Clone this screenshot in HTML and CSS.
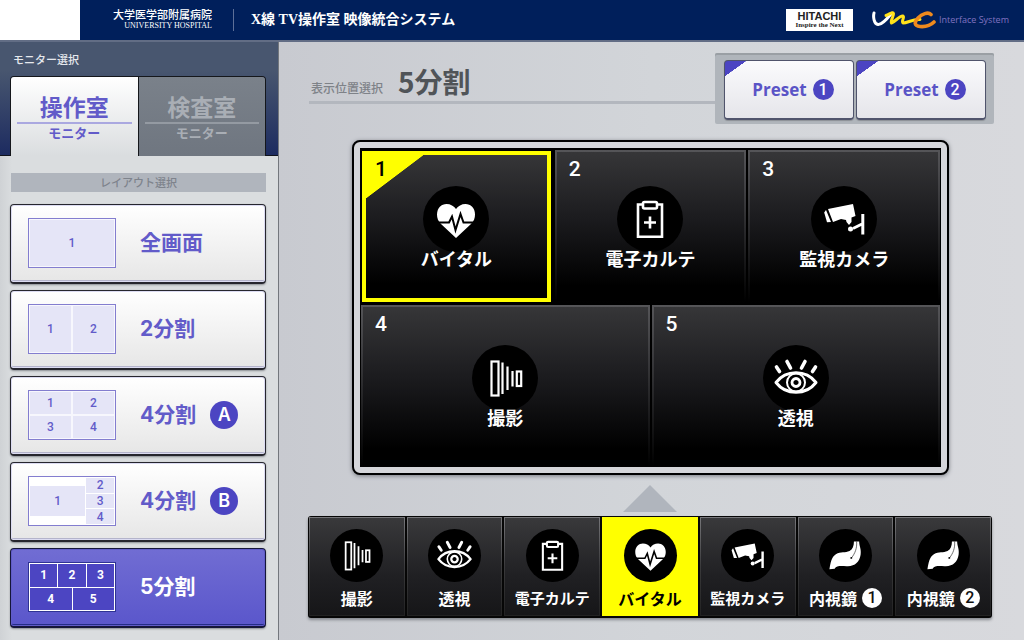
FILE: index.html
```html
<!DOCTYPE html>
<html lang="ja">
<head>
<meta charset="utf-8">
<meta name="viewport" content="width=device-width, initial-scale=1">
<title>X線 TV操作室 映像統合システム</title>
<link rel="stylesheet" href="styles.css">
</head>
<body>
<svg class="sprite" aria-hidden="true">
  <symbol id="i-heart" viewBox="-33 -33 66 66">
    <path fill="#fff" d="M0 19L-15 5C-18 2-19-1-19-4.500C-19-11-14.500-15-9.500-15C-5.500-15-2-13 0-10C2-13 5.500-15 9.500-15C14.500-15 19-11 19-4.500C19-1 18 2 15 5Z"/>
    <path fill="none" stroke="#000" stroke-width="2" d="M-20 3.500H-7L-4-2.500L-.5 11L4.500-5L7.500 3.500H20"/>
  </symbol>
  <symbol id="i-chart" viewBox="-33 -33 66 66">
    <g fill="none" stroke="#fff" stroke-width="2.600">
      <path d="M-8-14.500H-12V17.800H12V-14.500H8"/>
      <rect x="-7" y="-17" width="14" height="6.500" rx="1.500"/>
      <path d="M-6 3.500H6M0-2.500V9.500"/>
    </g>
  </symbol>
  <symbol id="i-camera" viewBox="-33 -33 66 66">
    <g fill="#fff">
      <path d="M-16-10L9-15L11.500-3L7.500-1.500L7.500 3L5 6L2.500 3L2 1L-3 0L-11 3Z"/>
      <path d="M-19.800-6.500L-18-9L-13 3L-17 3.200Z"/>
      <circle cx="6.500" cy="10" r="2.500"/>
    </g>
    <path fill="none" stroke="#fff" stroke-width="3" d="M9 9.500L18 5M18.800-5V15.500"/>
  </symbol>
  <symbol id="i-shoot" viewBox="-33 -33 66 66">
    <g fill="none" stroke="#fff" stroke-width="2.200">
      <rect x="-13.500" y="-16.500" width="7" height="34"/>
      <path d="M-2.500-15.500V16M2.500-11.500V12M7.500-7V8.500"/>
      <rect x="11.800" y="-6.500" width="4.400" height="14.500"/>
    </g>
  </symbol>
  <symbol id="i-eye" viewBox="-33 -33 66 66">
    <g fill="none" stroke="#fff" stroke-width="3" stroke-linecap="round" stroke-linejoin="round">
      <path d="M-20 4.500C-10-8.500 10-8.500 20 4.500C10 17.500-10 17.500-20 4.500Z"/>
      <circle cx="0" cy="4.500" r="4" stroke-width="2.800"/>
      <circle cx="0" cy="4.500" r="9" stroke-width="2"/>
      <path stroke-width="3.600" d="M-19.500-11L-16.500-6.500M-9-16.500L-5.500-10M9-16.500L5.500-10M19.500-11L16.500-6.500"/>
    </g>
  </symbol>
  <symbol id="i-scope" viewBox="-33 -33 66 66">
    <path fill="#fff" d="M10.500-17.500H17C17-12 20-8 18.800-1C17.500 8 12 13 3 13.300C-5 13.500-11 12-13.500 16.500L-20 17C-18.500 9-17.500 2-12-1.500C-6-5 0-3 5-5.500C9-8 10.500-12 10.500-17.500Z"/>
    <path fill="none" stroke="#222" stroke-width=".8" d="M13.800-17.500C14.500-9 12-3 7.500 3"/>
    <circle cx="7.200" cy="3" r="1.200"/>
  </symbol>
</svg>

<header class="topbar">
  <div class="topbar-blank"></div>
  <div class="hospital">
    <span class="hospital-ja">大学医学部附属病院</span>
    <span class="hospital-en">UNIVERSITY HOSPITAL</span>
  </div>
  <h1 class="system-name">X線 TV操作室 映像統合システム</h1>
  <div class="brand-hitachi">
    <span class="brand-name">HITACHI</span>
    <span class="brand-tag">Inspire the Next</span>
  </div>
  <div class="brand-umc">
    <svg class="umc-mark" viewBox="0 0 64 20" aria-hidden="true">
      <g fill="none" stroke-linecap="round" stroke-linejoin="round">
        <path stroke="#fff" stroke-width="3" d="M2 3C1 7 2 14 6 14.500C10 15 15 9 19 4"/>
        <path stroke="#ffe21a" stroke-width="3" d="M14 5.500C18 4 21 1.500 21.500 3.500C22 6 18 11 19.500 13C23 12 28 5 31 6C33 7 29 11 31 13C36 13 40 9 48 9.500"/>
        <path stroke="#ef8a1d" stroke-width="3.600" d="M59 4.500C56 1.500 50 4 46 8C42 12 42 16 48 16.500C54 17 59 15 62 12"/>
      </g>
    </svg>
    <span>Interface System</span>
  </div>
</header>

<div class="workspace">
  <aside class="sidebar">
    <div class="monitor-select">
      <h2 class="sidebar-title">モニター選択</h2>
      <div class="tabs" role="tablist">
        <button class="tab tab-active" role="tab" aria-selected="true"><span class="tab-name">操作室</span><span class="tab-sub">モニター</span></button>
        <button class="tab" role="tab" aria-selected="false"><span class="tab-name">検査室</span><span class="tab-sub">モニター</span></button>
      </div>
    </div>
    <h2 class="layout-title">レイアウト選択</h2>
    <div class="layouts">
      <button class="layout"><span class="mini mini-1"><i>1</i></span><span class="layout-name">全画面</span></button>
      <button class="layout"><span class="mini mini-2"><i>1</i><i>2</i></span><span class="layout-name">2分割</span></button>
      <button class="layout"><span class="mini mini-2"><i>1</i><i>2</i><i>3</i><i>4</i></span><span class="layout-name">4分割</span><span class="mark">A</span></button>
      <button class="layout"><span class="mini mini-b"><i class="mini-main">1</i><i>2</i><i>3</i><i>4</i></span><span class="layout-name">4分割</span><span class="mark">B</span></button>
      <button class="layout layout-active" aria-pressed="true"><span class="mini mini-5"><i>1</i><i>2</i><i>3</i><i>4</i><i>5</i></span><span class="layout-name">5分割</span></button>
    </div>
  </aside>

  <main class="stage">
    <div class="stage-head">
      <div class="stage-title">
        <span class="stage-caption">表示位置選択</span>
        <h2 class="stage-name">5分割</h2>
      </div>
      <div class="presets">
        <button class="preset">Preset <span class="preset-no">1</span></button>
        <button class="preset">Preset <span class="preset-no">2</span></button>
      </div>
    </div>

    <div class="monitor">
      <div class="screens">
        <button class="screen screen-active"><span class="screen-no">1</span><span class="screen-body"><svg class="disc"><use href="#i-heart"/></svg>バイタル</span></button>
        <button class="screen"><span class="screen-no">2</span><span class="screen-body"><svg class="disc"><use href="#i-chart"/></svg>電子カルテ</span></button>
        <button class="screen"><span class="screen-no">3</span><span class="screen-body"><svg class="disc"><use href="#i-camera"/></svg>監視カメラ</span></button>
        <button class="screen screen-wide"><span class="screen-no">4</span><span class="screen-body"><svg class="disc"><use href="#i-shoot"/></svg>撮影</span></button>
        <button class="screen screen-wide"><span class="screen-no">5</span><span class="screen-body"><svg class="disc"><use href="#i-eye"/></svg>透視</span></button>
      </div>
    </div>

    <div class="sources">
      <button class="source"><svg class="disc"><use href="#i-shoot"/></svg><span class="source-name">撮影</span></button>
      <button class="source"><svg class="disc"><use href="#i-eye"/></svg><span class="source-name">透視</span></button>
      <button class="source"><svg class="disc"><use href="#i-chart"/></svg><span class="source-name source-long">電子カルテ</span></button>
      <button class="source source-active" aria-pressed="true"><svg class="disc"><use href="#i-heart"/></svg><span class="source-name">バイタル</span></button>
      <button class="source"><svg class="disc"><use href="#i-camera"/></svg><span class="source-name source-long">監視カメラ</span></button>
      <button class="source"><svg class="disc"><use href="#i-scope"/></svg><span class="source-name">内視鏡<span class="source-no">1</span></span></button>
      <button class="source"><svg class="disc"><use href="#i-scope"/></svg><span class="source-name">内視鏡<span class="source-no">2</span></span></button>
    </div>
  </main>
</div>
</body>
</html>
```

FILE: styles.css
```css
* { box-sizing: border-box; }

body {
  margin: 0;
  min-height: 100vh;
  display: flex;
  flex-direction: column;
  font-family: "Noto Sans CJK JP", sans-serif;
  font-weight: 700;
  background: #d2d4d8;
}

h1, h2 { margin: 0; }

button {
  font: inherit;
  margin: 0;
  padding: 0;
  border: 0;
  cursor: pointer;
}

.sprite { position: absolute; width: 0; height: 0; }

/* Top bar */
.topbar {
  display: flex;
  align-items: center;
  height: 42px;
  padding-right: 15px;
  background: #001f5b;
  border-bottom: 2px solid #626d85;
  color: #fff;
  font-family: "Liberation Serif", "Noto Sans CJK JP", serif;
  white-space: nowrap;
}

.topbar-blank { width: 80px; align-self: stretch; background: #fff; }

.hospital {
  display: flex;
  flex-direction: column;
  align-items: flex-end;
  width: 154px;
  padding-right: 21px;
  border-right: 1px solid #5d6f98;
}

.hospital-ja { font-size: 11px; line-height: 12px; font-weight: 500; }
.hospital-en { font-size: 8px; line-height: 10px; font-weight: 400; }

.system-name {
  flex: 1;
  padding-left: 17px;
  font-size: 14px;
  line-height: 20px;
}

.brand-hitachi {
  display: flex;
  flex-direction: column;
  align-items: center;
  width: 67px;
  padding: 2px 0;
  background: #fff;
  color: #222;
}

.brand-name { font: 700 11px/10px "Liberation Sans", sans-serif; }
.brand-tag { font: 700 7px/8px "Liberation Serif", serif; }

.brand-umc {
  display: flex;
  align-items: center;
  gap: 3px;
  margin-left: 19px;
  color: #8173c0;
  font: 400 9px/12px "Open Sans", sans-serif;
}

.umc-mark { width: 64px; height: 20px; }

/* Workspace */
.workspace { flex: 1; display: flex; }

.sidebar {
  width: 279px;
  flex: none;
  border-right: 1px solid #73777d;
  background: linear-gradient(90deg, #cfd2d5, #dadddf 12px, #dadddf);
}

.monitor-select {
  padding: 7px 12px 0 10px;
  background: linear-gradient(#48566f 25%, #1c2b60);
  box-shadow: inset 0 -1px #10131c;
}

.sidebar-title {
  padding-left: 3px;
  font-size: 11px;
  line-height: 20px;
  font-weight: 500;
  color: #e6e9ee;
}

.tabs {
  display: flex;
  margin-top: 7px;
  border: solid #15171b;
  border-width: 1px 1px 0;
  border-radius: 4px 4px 0 0;
  overflow: hidden;
}

.tab {
  flex: 1;
  height: 79px;
  padding: 13px 6px 0;
  display: flex;
  flex-direction: column;
  background: linear-gradient(#7a818a, #6f7680);
  color: #a9aeb5;
}

.tab-active {
  background: linear-gradient(#fff, #dadddf);
  border-right: 1px solid #15171b;
  color: #625bc9;
}

.tab-name {
  font-size: 23px;
  line-height: 32px;
  border-bottom: 2px solid #aaa8e0;
}

.tab:not(.tab-active) .tab-name { border-color: #949aa2; }
.tab-sub { font-size: 13px; line-height: 18px; }

.layout-title {
  margin: 17px 12px 0 11px;
  background: #b0b5bd;
  color: #7e838c;
  font-size: 11px;
  line-height: 19px;
  font-weight: 500;
  text-align: center;
}

.layouts {
  display: flex;
  flex-direction: column;
  gap: 6px;
  padding: 12px 12px 12px 10px;
}

.layout {
  display: flex;
  align-items: center;
  height: 80px;
  padding: 0 17px 1px;
  border: 1px solid #26262e;
  border-bottom-width: 2px;
  border-radius: 4px;
  background: linear-gradient(#fff, #e6e6e6);
  box-shadow: inset 0 0 0 1px #dcdcf2, inset 0 -2px #b4b4cb, 0 1px 2px #8a8d92;
  color: #625bc9;
}

.layout-active {
  background: linear-gradient(#716dd3, #5a56cb);
  box-shadow: inset 0 0 0 1px #605cc8, inset 0 -2px #232c86, 0 1px 2px #8a8d92;
  border-color: #15163a;
  color: #fff;
}

.layout-name {
  margin-left: 24px;
  font: 700 21px/28px Inter, "Noto Sans CJK JP", sans-serif;
}

.mark {
  width: 28px;
  margin-left: 14px;
  border-radius: 50%;
  background: #4c45c2;
  color: #fff;
  font: 600 18px/28px Inter, sans-serif;
}

.mini {
  display: grid;
  gap: 2px;
  width: 88px;
  height: 50px;
  padding: 1px;
  border: 1px solid #837dcf;
  background: #f7f7fd;
  font: 500 12px/14px Roboto, sans-serif;
}

.mini i {
  display: grid;
  place-items: center;
  font-style: normal;
  background: #e5e5f7;
}

.mini-2 { grid-template-columns: 1fr 1fr; }
.mini-b { grid-template-columns: 2fr 1fr; grid-template-rows: repeat(3, 1fr); gap: 1px; background: #fff; }
.mini-b .mini-main { grid-row: span 3; margin: 8px 0; }

.mini-5 {
  grid-template-columns: repeat(6, 1fr);
  gap: 1px;
  background: #fff;
  border-color: #2f3394;
  font-weight: 700;
}

.mini-5 i { grid-column: span 2; background: #4c45c2; }
.mini-5 i:nth-child(n+4) { grid-column: span 3; }

/* Stage */
.stage {
  flex: 1;
  min-width: 0;
  padding: 11px 30px 20px;
  background: linear-gradient(90deg, #c8cad0, #d2d5d9 50%, #d8d9dd);
}

.stage-head { display: flex; align-items: flex-end; }

.stage-title {
  flex: 1;
  display: flex;
  align-items: baseline;
  gap: 15px;
  margin-bottom: 20px;
  padding-left: 2px;
  border-bottom: 3px solid #b3b7be;
  white-space: nowrap;
}

.stage-caption { font-size: 12px; font-weight: 500; color: #7e8288; }

.stage-name {
  padding-bottom: 1px;
  font-size: 28px;
  line-height: 38px;
  color: #505458;
}

.presets {
  display: flex;
  gap: 2px;
  padding: 7px 8px 4px 9px;
  border-radius: 2px;
  background: #b0b5bb;
  box-shadow: inset 0 2px #9a9fa4;
}

.preset {
  display: flex;
  align-items: center;
  justify-content: center;
  gap: 6px;
  width: 130px;
  height: 60px;
  padding-left: 8px;
  border: 1px solid #50546c;
  border-bottom-width: 2px;
  border-radius: 4px;
  background:
    linear-gradient(to bottom right, #4c45c2 50%, transparent 51%) 0 0 / 21px 15px no-repeat,
    linear-gradient(#fbfbfd, #e5e5ea);
  box-shadow: 0 1px 1px #8c9096;
  color: #5a54c6;
  font: 700 17px/24px "Open Sans", sans-serif;
}

.preset-no {
  width: 21px;
  border-radius: 50%;
  background: #4c45c2;
  color: #fff;
  font: 500 16px/21px Roboto, sans-serif;
}

.monitor {
  margin: 16px 45px 0 43px;
  padding: 6px;
  border: 2px solid #000;
  border-radius: 8px;
  background: #d5d6da;
  box-shadow: 0 1px 4px #777a80;
}

.screens {
  display: grid;
  grid-template-columns: repeat(6, 1fr);
  grid-template-rows: 153px 162px;
  gap: 2px;
  padding: 2px 1px 0;
  background: #000;
}

.screen, .source {
  border: 2px solid;
  border-image: linear-gradient(#555558, #38383b 35%, #000) 1;
  background: linear-gradient(#363638, #1b1b1e 45%, #000 90%);
  color: #fff;
}

.screen {
  grid-column: span 2;
  display: grid;
  grid-template-columns: 1fr;
}

.screen-wide { grid-column: span 3; }

.screen-no, .screen-body { grid-area: 1 / 1; }

.screen-no {
  place-self: start;
  padding: 5px 12px;
  font: 500 21px/24px Roboto, sans-serif;
}

.screen-body {
  place-self: center;
  display: flex;
  flex-direction: column;
  align-items: center;
  padding-bottom: 4px;
  font-size: 18px;
  line-height: 12px;
}

.disc { width: 66px; height: 66px; border-radius: 50%; background: #000; }

.screen-active {
  margin: 1px 2px 1px 1px;
  border: 4px solid #ff0;
  border-image: none;
  background:
    linear-gradient(to bottom right, #ff0 50%, transparent 51%) 0 0 / 57px 43px no-repeat,
    linear-gradient(#363638, #1b1b1e 45%, #000 90%);
}

.screen-active .screen-no { padding: 2px 9px; color: #000; }

.sources {
  display: flex;
  gap: 2px;
  margin: 41px 2px 0 -1px;
  padding: 1px 1px 2px;
  border-radius: 3px;
  background: #060606;
  box-shadow: 0 2px 3px #85888e;
}

.source {
  position: relative;
  flex: 1 1 0;
  min-width: 0;
  display: flex;
  flex-direction: column;
  align-items: center;
  gap: 4px;
  padding: 11px 0 5px;
  border-width: 1px;
  border-image: linear-gradient(#77777a, #3a3a3c 50%, #222) 1;
  background: linear-gradient(#39393b, #202023 60%, #161618);
}

.source .disc { width: 53px; height: 53px; }

.source-name {
  display: flex;
  align-items: center;
  gap: 5px;
  font-size: 16px;
  line-height: 24px;
  white-space: nowrap;
}

.source-long { font-size: 15px; }

.source-no {
  width: 20px;
  border-radius: 50%;
  background: #fff;
  color: #111;
  font: 500 16px/20px Roboto, sans-serif;
}

.source-active {
  border-image: none;
  border-color: #ff0;
  background: #ff0;
  color: #000;
}

/* Pointer linking the chosen source to the monitor above */
.source-active::before {
  content: "";
  position: absolute;
  bottom: calc(100% + 6px);
  left: calc(50% - 27px);
  width: 54px;
  height: 27px;
  background: #b0b5bd;
  clip-path: polygon(50% 0, 100% 100%, 0 100%);
}
```
